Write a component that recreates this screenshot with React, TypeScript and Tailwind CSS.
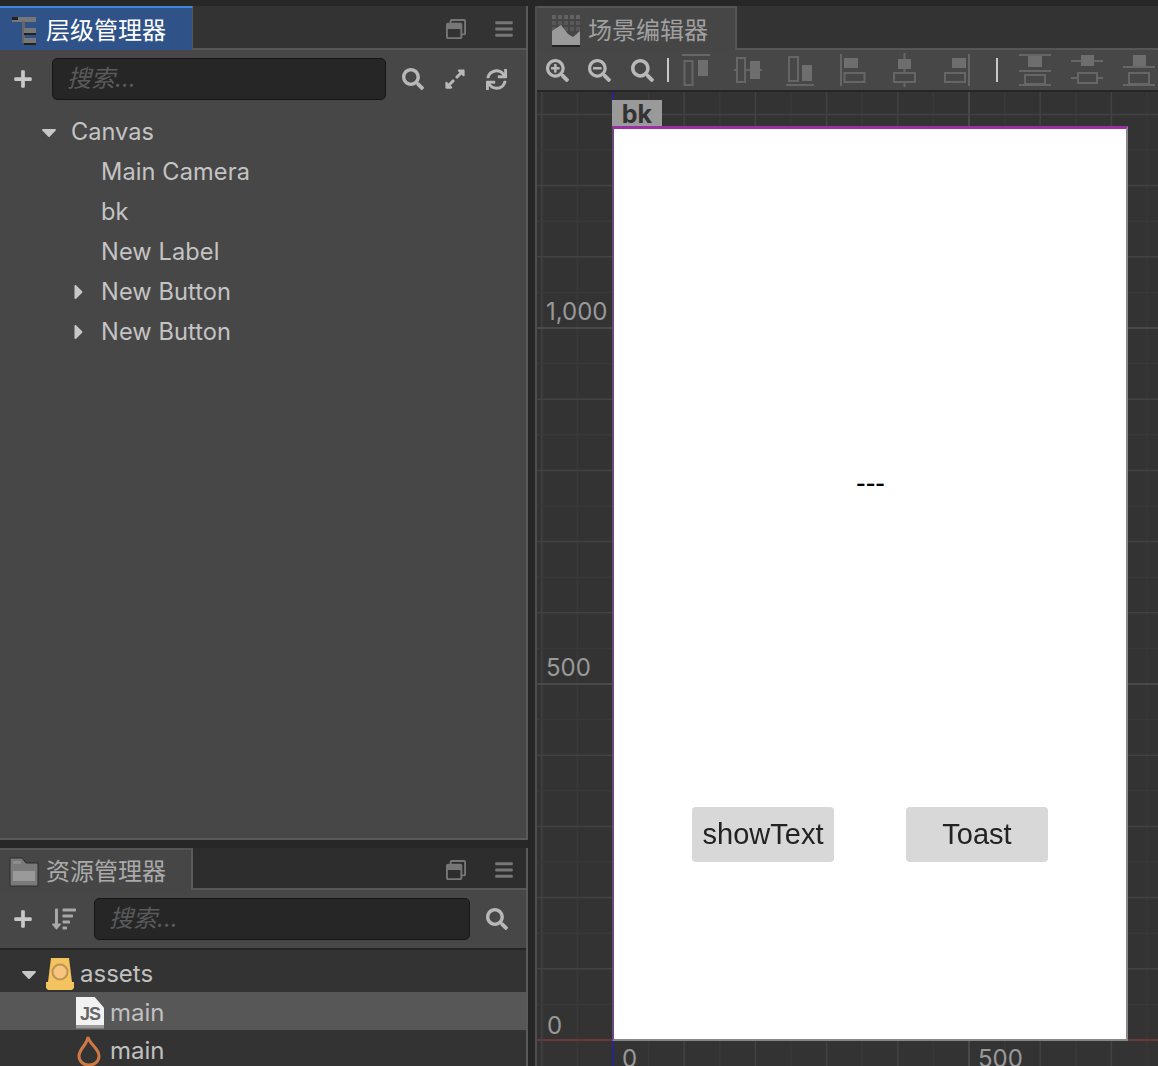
import {
  FaBars,
  FaCaretDown,
  FaCaretRight,
  FaExpandAlt,
  FaPlus,
  FaRegWindowRestore,
  FaSearch,
  FaSearchMinus,
  FaSearchPlus,
  FaSortAmountDown,
  FaSync,
} from "react-icons/fa";
import type { ReactNode } from "react";

const step = 35.6;
const originX = 78;
const originY = 948;

const TreeIcon = () => (
  <svg width="24" height="28" viewBox="0 0 24 28" className="shrink-0">
    <rect x="0" y="0" width="24" height="5" fill="#777" />
    <rect x="0" y="0" width="6" height="3" fill="#222" />
    <rect x="10" y="4" width="3" height="22" fill="#666" />
    <rect x="12" y="11" width="12" height="6" fill="#777" />
    <rect x="12" y="21" width="12" height="6" fill="#777" />
    <rect x="12" y="16" width="12" height="2" fill="#222" />
    <rect x="12" y="26" width="12" height="2" fill="#222" />
  </svg>
);

const SceneIcon = () => (
  <svg width="28" height="32" viewBox="0 0 28 32" className="shrink-0">
    {[0, 6, 12].map((y) =>
      [0, 6, 12, 18, 24].map((x) => (
        <rect key={`${x}-${y}`} x={x} y={y} width="4" height="4" fill={y === 0 ? "#626262" : "#585858"} />
      ))
    )}
    <path d="M0 30V16L9 10L16 19L21 22L28 16V30Z" fill="#9a9a9a" />
    <rect x="0" y="30" width="28" height="2" fill="#222" />
  </svg>
);

const FolderIcon = () => (
  <svg width="30" height="30" viewBox="0 0 30 30" className="shrink-0">
    <path d="M1 1H13L17 6H29V29H1Z" fill="#7a7a7a" stroke="#2a2a2a" strokeWidth="1" />
    <rect x="4" y="14" width="22" height="10" fill="#9a9a9a" />
    <rect x="4" y="4" width="8" height="3" fill="#8d8d8d" />
  </svg>
);

const AssetsIcon = () => (
  <svg width="28" height="32" viewBox="0 0 28 32" className="shrink-0">
    <path d="M5 0H23L26 24H28V30L26 32H2L0 30V24H2Z" fill="#f4c25e" />
    <circle cx="14" cy="14" r="7.5" fill="#f8c47f" stroke="#bb9652" strokeWidth="2" />
  </svg>
);

const FlameIcon = () => (
  <svg width="26" height="32" viewBox="0 0 26 32" className="shrink-0">
    <path
      d="M12 2C13 9 23 13 23 21C23 27 18 30 13 30C8 30 3 27 3 21C3 14 11 10 12 2Z"
      fill="none"
      stroke="#cf7a45"
      strokeWidth="3"
    />
  </svg>
);

const JsIcon = () => (
  <div className="relative flex h-[32px] w-[28px] shrink-0 items-center justify-center bg-[linear-gradient(to_bottom,#f2f2f2_0,#f2f2f2_28px,#9a9a9a_28px)] [clip-path:polygon(0_0,65%_0,100%_35%,100%_100%,0_100%)]">
    <span className="mt-[2px] font-['Liberation_Sans',sans-serif] text-[18px] leading-none font-bold tracking-[-1px] text-[#666]">
      JS
    </span>
  </div>
);

// which way the bars sit: drawn per icon, all share the same muted colours
const Align = ({ children, w }: { children: ReactNode; w: number }) => (
  <svg width={w} height="34" viewBox={`0 0 ${w} 34`} className="shrink-0">
    {children}
  </svg>
);

const line = "#666";
const fill = "#6e6e6e";

const SearchBox = ({ className }: { className: string }) => (
  <div
    className={`flex h-[42px] items-center rounded-[5px] border border-[#171717] bg-[#262626] pl-[14px] text-[24px] text-[#5a5a5a] italic ${className}`}
  >
    搜索...
  </div>
);

const TabHeader = ({
  active,
  icon,
  title,
}: {
  active?: boolean;
  icon: ReactNode;
  title: string;
}) => (
  <div className={active ? "flex h-[44px] shrink-0" : "flex h-[42px] shrink-0"}>
    <div
      className={
        active
          ? "flex w-[193px] items-center border-t-2 border-r border-t-[#3f87dd] border-r-[#555] bg-[#2f5289] pt-[4px] pl-[12px] text-[24px] text-white"
          : "flex w-[193px] items-center border-t-2 border-r-2 border-t-[#555] border-r-[#5a5a5a] bg-[#464646] pt-[3px] pl-[9px] text-[24px] text-[#aaa]"
      }
    >
      {icon}
      <span className={active ? "ml-[10px] leading-none" : "ml-[7px] leading-none"}>{title}</span>
    </div>
    <div className="flex flex-1 items-center justify-end gap-[28px] border-b-2 border-[#565656] pt-[4px] pr-[12px] text-[#777]">
      <FaRegWindowRestore size={20} />
      <FaBars size={20} />
    </div>
  </div>
);

const TreeRow = ({ label, arrow }: { label: string; arrow?: boolean }) => (
  <div className="flex h-[40px] items-center pl-[66px] text-[23.6px] tracking-[0.1px] text-[#c4c4c4]">
    <div className="flex w-[35px] shrink-0 items-center pl-[1px]">
      {arrow && <FaCaretRight size={24} className="text-[#c8c8c8]" />}
    </div>
    <span className="leading-none">{label}</span>
  </div>
);

export default function App() {
  const xs = Array.from({ length: 18 }, (_, i) => i - 2);
  const ys = Array.from({ length: 28 }, (_, i) => i);

  return (
    <div className="flex h-[1066px] w-[1158px] overflow-hidden bg-[#272727] pt-[6px] font-['Inter','Noto_Sans_CJK_SC',sans-serif]">
      {/* left column */}
      <div className="flex w-[528px] shrink-0 flex-col">
        <div className="flex h-[834px] shrink-0 flex-col border-r-2 border-b-2 border-[#5a5a5a] bg-[#333]">
          <TabHeader active icon={<TreeIcon />} title="层级管理器" />
          <div className="flex h-[60px] shrink-0 items-center bg-[#474747] pb-[2px] pl-[13px] text-[#b8b8b8]">
            <FaPlus size={20} className="text-[#c8c8c8]" />
            <SearchBox className="ml-[19px] w-[334px]" />
            <FaSearch size={22} className="ml-[16px]" />
            <FaExpandAlt size={22} className="ml-[20px]" />
            <FaSync size={21} className="ml-[20px]" />
          </div>
          <div className="flex-1 bg-[#474747] pt-[2px]">
            <div className="flex h-[40px] items-center pl-[37px] text-[23.6px] text-[#c4c4c4]">
              <div className="flex w-[34px] shrink-0 items-center">
                <FaCaretDown size={24} className="text-[#c8c8c8]" />
              </div>
              <span className="leading-none">Canvas</span>
            </div>
            <TreeRow label="Main Camera" />
            <TreeRow label="bk" />
            <TreeRow label="New Label" />
            <TreeRow label="New Button" arrow />
            <TreeRow label="New Button" arrow />
          </div>
        </div>

        <div className="mt-[8px] flex flex-1 flex-col border-r-2 border-[#5a5a5a] bg-[#2d2d2d]">
          <TabHeader icon={<FolderIcon />} title="资源管理器" />
          <div className="flex h-[60px] shrink-0 items-center border-b-2 border-[#262626] bg-[#474747] pl-[13px] text-[#b8b8b8]">
            <FaPlus size={20} className="text-[#c8c8c8]" />
            <FaSortAmountDown size={24} className="ml-[19px] text-[#a8a8a8]" />
            <SearchBox className="ml-[18px] w-[376px]" />
            <FaSearch size={22} className="ml-[16px]" />
          </div>
          <div className="flex-1 bg-[#333]">
            <div className="flex h-[42px] items-center pt-[6px] pl-[17px] text-[24px] text-[#c0c0c0]">
              <FaCaretDown size={24} className="shrink-0 text-[#c8c8c8]" />
              <div className="ml-[5px]">
                <AssetsIcon />
              </div>
              <span className="ml-[6px] leading-none">assets</span>
            </div>
            <div className="flex h-[38px] items-center bg-[#575757] pt-[3px] pl-[76px] text-[24px] text-[#c0c0c0]">
              <JsIcon />
              <span className="ml-[6px] leading-none">main</span>
            </div>
            <div className="flex h-[38px] items-center pt-[3px] pl-[76px] text-[24px] text-[#c0c0c0]">
              <FlameIcon />
              <span className="ml-[8px] leading-none">main</span>
            </div>
          </div>
        </div>
      </div>

      {/* scene editor */}
      <div className="ml-[7px] flex flex-1 flex-col border-l-2 border-[#4e4e4e] bg-[#333]">
        <div className="flex h-[44px] shrink-0">
          <div className="flex w-[200px] items-center border-t-2 border-r-2 border-[#555] bg-[#464646] pt-[4px] pl-[15px] text-[24px] text-[#a0a0a0]">
            <SceneIcon />
            <span className="ml-[8px] leading-none">场景编辑器</span>
          </div>
          <div className="flex-1 border-b-2 border-[#565656]" />
        </div>

        <div className="flex h-[42px] shrink-0 items-center overflow-hidden border-b-2 border-[#262626] bg-[#474747] pl-[9px] text-[#b8b8b8]">
          <FaSearchPlus size={23} className="shrink-0" />
          <FaSearchMinus size={23} className="ml-[19px] shrink-0" />
          <FaSearch size={23} className="ml-[20px] shrink-0" />
          <div className="ml-[13px] h-[24px] w-[2px] shrink-0 bg-[#c8c8c8]" />
          <div className="ml-[13px]">
            <Align w={28}>
              <rect x="0" y="1" width="28" height="2" fill={line} />
              <rect x="2.500" y="8" width="8" height="24" fill="none" stroke={line} strokeWidth="2" />
              <rect x="16" y="7" width="10" height="16" fill={fill} />
            </Align>
          </div>
          <div className="ml-[24px]">
            <Align w={28}>
              <rect x="0" y="16" width="28" height="2" fill={line} />
              <rect x="3" y="5" width="8" height="24" fill="#474747" stroke={line} strokeWidth="2" />
              <rect x="16" y="8" width="10" height="18" fill={fill} />
            </Align>
          </div>
          <div className="ml-[24px]">
            <Align w={28}>
              <rect x="0" y="31" width="28" height="2" fill={line} />
              <rect x="3" y="4" width="9" height="24" fill="none" stroke={line} strokeWidth="2" />
              <rect x="16" y="12" width="10" height="16" fill={fill} />
            </Align>
          </div>
          <div className="ml-[26px]">
            <Align w={26}>
              <rect x="0" y="1" width="2" height="32" fill={line} />
              <rect x="4" y="5" width="14" height="10" fill={fill} />
              <rect x="4.500" y="20" width="20" height="9" fill="none" stroke={line} strokeWidth="2" />
            </Align>
          </div>
          <div className="ml-[27px]">
            <Align w={23}>
              <rect x="10.500" y="0" width="2" height="34" fill={line} />
              <rect x="5" y="6" width="13" height="10" fill={fill} />
              <rect x="1" y="20" width="21" height="9" fill="#474747" stroke={line} strokeWidth="2" />
            </Align>
          </div>
          <div className="ml-[28px]">
            <Align w={26}>
              <rect x="24" y="1" width="2" height="32" fill={line} />
              <rect x="8" y="5" width="14" height="10" fill={fill} />
              <rect x="1" y="20" width="20" height="9" fill="none" stroke={line} strokeWidth="2" />
            </Align>
          </div>
          <div className="ml-[26px] h-[24px] w-[2px] shrink-0 bg-[#c8c8c8]" />
          <div className="ml-[21px]">
            <Align w={32}>
              <rect x="0" y="1" width="32" height="2" fill={line} />
              <rect x="9" y="3" width="14" height="11" fill={fill} />
              <rect x="0" y="17" width="32" height="2" fill={line} />
              <rect x="6" y="22" width="20" height="9" fill="none" stroke={line} strokeWidth="2" />
              <rect x="0" y="31" width="32" height="2" fill={line} />
            </Align>
          </div>
          <div className="ml-[20px]">
            <Align w={32}>
              <rect x="0" y="7" width="32" height="2" fill={line} />
              <rect x="10" y="2" width="13" height="11" fill={fill} />
              <rect x="0" y="24" width="32" height="2" fill={line} />
              <rect x="7" y="20" width="19" height="10" fill="#474747" stroke={line} strokeWidth="2" />
            </Align>
          </div>
          <div className="ml-[20px]">
            <Align w={32}>
              <rect x="0" y="13" width="32" height="2" fill={line} />
              <rect x="10" y="2" width="13" height="11" fill={fill} />
              <rect x="0" y="31" width="32" height="2" fill={line} />
              <rect x="6" y="20" width="20" height="11" fill="none" stroke={line} strokeWidth="2" />
            </Align>
          </div>
        </div>

        {/* canvas */}
        <div className="relative flex-1 overflow-hidden bg-[#333]">
          <svg width="623" height="974" className="absolute top-0 left-0">
            {xs.map((i) => (
              <line
                key={`v${i}`}
                x1={originX - 2 + i * step}
                x2={originX - 2 + i * step}
                y1="0"
                y2="974"
                stroke={i === 10 ? "#525252" : i % 2 === 0 ? "#424242" : "#393939"}
                strokeWidth="1.500"
              />
            ))}
            {ys.map((i) => (
              <line
                key={`h${i}`}
                x1="0"
                x2="623"
                y1={originY - i * step}
                y2={originY - i * step}
                stroke={i === 10 || i === 20 ? "#525252" : i % 2 === 0 ? "#424242" : "#393939"}
                strokeWidth="1.500"
              />
            ))}
            <line x1="0" x2="623" y1={originY} y2={originY} stroke="#6b3838" strokeWidth="2" />
            <line x1="76" x2="76" y1="0" y2="974" stroke="#26268c" strokeWidth="2" />
          </svg>

          <span className="absolute top-[208px] left-[9px] text-[24px] leading-none text-[#999]">1,000</span>
          <span className="absolute top-[564px] left-[9px] text-[24px] leading-none text-[#999]">500</span>
          <span className="absolute top-[922px] left-[10px] text-[24px] leading-none text-[#999]">0</span>
          <span className="absolute top-[955px] left-[85px] text-[24px] leading-none text-[#999]">0</span>
          <span className="absolute top-[955px] left-[441px] text-[24px] leading-none text-[#999]">500</span>

          <div className="absolute top-[8px] left-[75px] flex h-[28px] w-[50px] items-center justify-center bg-[#9a9a9a] text-[25px] leading-none font-bold text-[#333]">
            bk
          </div>

          <div className="absolute top-[34px] left-[75px] h-[915px] w-[516px] border-t-[3px] border-r-[2px] border-b-[2px] border-l-[2px] border-t-[#9c2fa3] border-r-[#888] border-b-[#888] border-l-[#6b4a78] bg-white">
            <span className="absolute top-[340px] left-[242px] font-['Liberation_Sans',sans-serif] text-[29px] leading-none text-black">
              ---
            </span>
            <div className="absolute top-[678px] left-[78px] flex h-[55px] w-[142px] items-center justify-center rounded-[4px] bg-[#d8d8d8] font-['Liberation_Sans',sans-serif] text-[29px] text-[#222] blur-[0.4px]">
              showText
            </div>
            <div className="absolute top-[678px] left-[292px] flex h-[55px] w-[142px] items-center justify-center rounded-[4px] bg-[#d8d8d8] font-['Liberation_Sans',sans-serif] text-[29px] text-[#222] blur-[0.4px]">
              Toast
            </div>
          </div>
        </div>
      </div>
    </div>
  );
}
